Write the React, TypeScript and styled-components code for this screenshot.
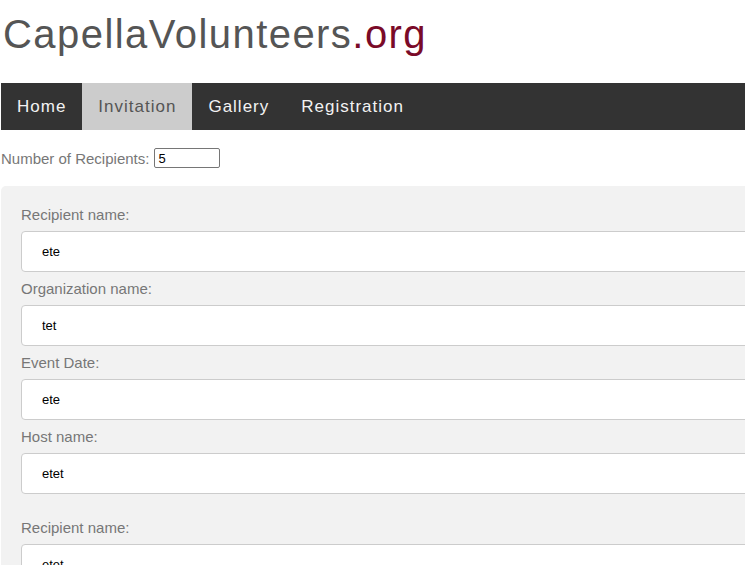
import React, { useState } from 'react';
import styled, { createGlobalStyle } from 'styled-components';

const GlobalStyle = createGlobalStyle`
  html, body {
    margin: 0;
    padding: 0;
    background: #fff;
    overflow: hidden;
  }
  body {
    font-family: 'Liberation Sans', Arial, sans-serif;
  }
`;

type Recipient = {
  recipient: string;
  organization: string;
  date: string;
  host: string;
};

const RECIPIENTS: Recipient[] = [
  { recipient: 'ete', organization: 'tet', date: 'ete', host: 'etet' },
  { recipient: 'etet', organization: '', date: '', host: '' },
];

const NAV = ['Home', 'Invitation', 'Gallery', 'Registration'];

const App: React.FC = () => {
  const [active, setActive] = useState('Invitation');
  const [count, setCount] = useState('5');

  return (
    <>
      <GlobalStyle />
      <Page>
        <Title>
          CapellaVolunteers<Org>.org</Org>
        </Title>
        <Nav>
          {NAV.map(item => (
            <NavItem key={item} active={active === item} onClick={() => setActive(item)}>
              {item}
            </NavItem>
          ))}
        </Nav>
        <CountRow>
          Number of Recipients:
          <CountInput value={count} onChange={e => setCount(e.target.value)} />
        </CountRow>
        <Panel>
          {RECIPIENTS.map((r, i) => (
            <Group key={i}>
              <Label>Recipient name:</Label>
              <Field defaultValue={r.recipient} />
              <Label>Organization name:</Label>
              <Field defaultValue={r.organization} />
              <Label>Event Date:</Label>
              <Field defaultValue={r.date} />
              <Label>Host name:</Label>
              <Field defaultValue={r.host} />
            </Group>
          ))}
        </Panel>
      </Page>
    </>
  );
};

const Page = styled.div`
  padding: 0 1px;
  width: 1000px;
`;

const Title = styled.h1`
  margin: 0;
  padding: 12px 0 0 2px;
  height: 83px;
  box-sizing: border-box;
  font-size: 40px;
  font-weight: normal;
  letter-spacing: 1.45px;
  line-height: 44px;
  color: #555;
`;

const Org = styled.span`
  color: #7a0a28;
`;

const Nav = styled.nav`
  display: flex;
  background: #333;
  height: 47px;
`;

const NavItem = styled.a<{ active: boolean }>`
  display: flex;
  align-items: center;
  padding: 0 16px;
  font-size: 17px;
  letter-spacing: 1px;
  cursor: pointer;
  color: ${p => (p.active ? '#555' : '#f2f2f2')};
  background: ${p => (p.active ? '#ccc' : 'transparent')};
`;

const CountRow = styled.div`
  display: flex;
  align-items: center;
  gap: 5px;
  margin-top: 18px;
  height: 20px;
  font-size: 15px;
  color: #777;
`;

const CountInput = styled.input`
  width: 66px;
  height: 20px;
  box-sizing: border-box;
  border: 1px solid #767676;
  border-radius: 2px;
  padding: 0 3px;
  font-family: 'Liberation Sans', Arial, sans-serif;
  font-size: 13px;
  color: #000;
`;

const Panel = styled.div`
  margin-top: 18px;
  background: #f2f2f2;
  border-radius: 5px;
  padding: 20px;
`;

const Group = styled.div`
  display: flex;
  flex-direction: column;
  margin-bottom: 17px;
`;

const Label = styled.label`
  font-size: 15px;
  line-height: 17px;
  color: #777;
`;

const Field = styled.input`
  margin: 8px 0;
  padding: 12px 20px;
  height: 41px;
  box-sizing: border-box;
  border: 1px solid #ccc;
  border-radius: 4px;
  background: #fff;
  font-family: 'Liberation Sans', Arial, sans-serif;
  font-size: 13px;
  color: #000;
`;

export default App;
